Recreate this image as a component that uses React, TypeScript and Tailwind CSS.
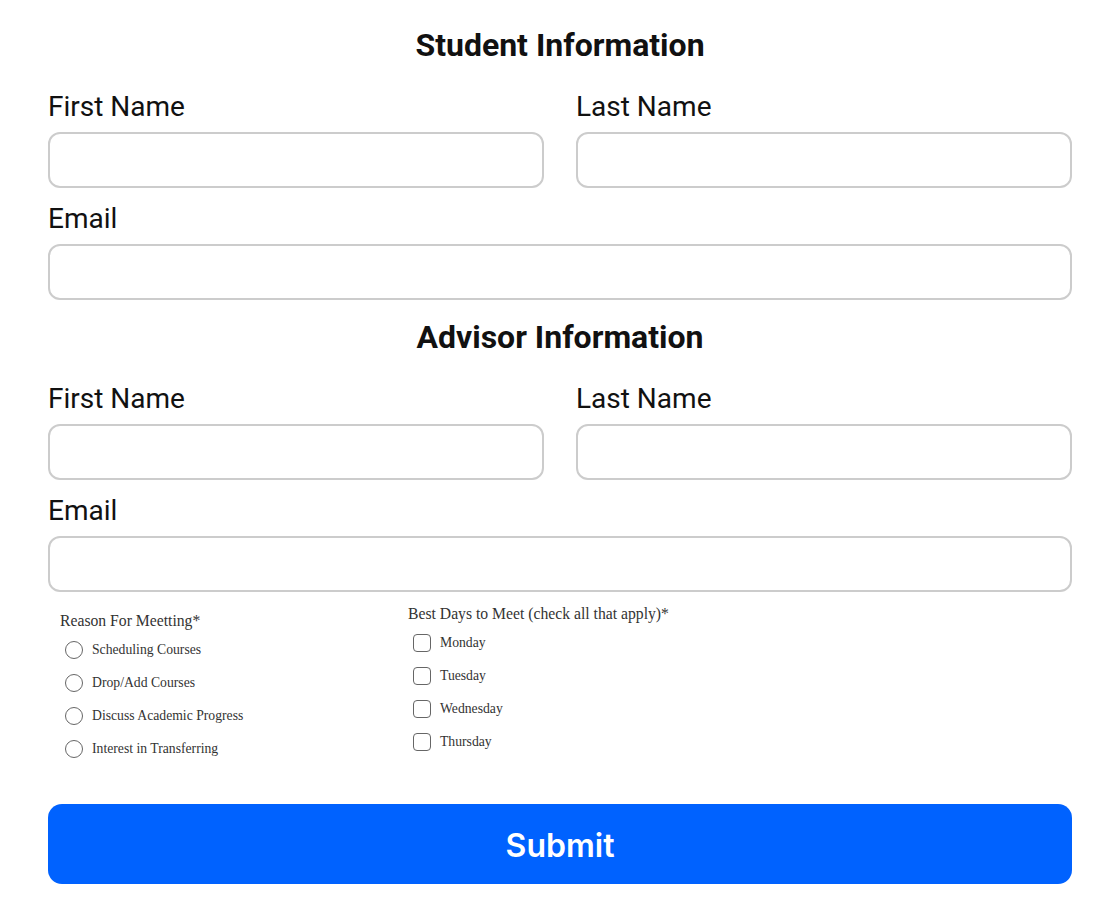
import React from "react";

const inputCls =
  "block w-full h-14 rounded-xl border-2 border-[#cccccc] bg-white outline-none px-3 text-xl";

function Field({ label }: { label: string }) {
  return (
    <div className="flex flex-col">
      <label className="pt-px text-[28px] leading-8 text-[#111]">{label}</label>
      <input type="text" className={`${inputCls} mt-[9px]`} />
    </div>
  );
}

function Section({ title, first }: { title: string; first?: boolean }) {
  return (
    <section className="flex flex-col">
      <h2
        className={`text-center text-[32px] leading-9 font-bold text-[#111] ${
          first ? "mt-[27px]" : "mt-[19px]"
        }`}
      >
        {title}
      </h2>
      <div className="mt-[27px] grid grid-cols-2 gap-8">
        <Field label="First Name" />
        <Field label="Last Name" />
      </div>
      <div className="mt-[14px]">
        <Field label="Email" />
      </div>
    </section>
  );
}

const reasons = [
  "Scheduling Courses",
  "Drop/Add Courses",
  "Discuss Academic Progress",
  "Interest in Transferring",
];
const days = ["Monday", "Tuesday", "Wednesday", "Thursday"];

export default function App() {
  return (
    <div className="min-h-screen bg-white font-['Roboto',sans-serif]">
      <form className="mx-12 flex flex-col" onSubmit={(e) => e.preventDefault()}>
        <Section title="Student Information" first />
        <Section title="Advisor Information" />

        <div className="flex font-['Liberation_Serif',serif] text-[#333]">
          <div className="w-[360px] pl-3 pt-[19px]">
            <div className="text-[15.7px] leading-5">Reason For Meetting*</div>
            <div className="mt-[9px] flex flex-col gap-[13px]">
              {reasons.map((r) => (
                <label key={r} className="flex items-center h-5 text-[13.7px]">
                  <span className="ml-[5px] w-[18px] h-[18px] rounded-full border border-[#666] bg-white" />
                  <span className="ml-[9px]">{r}</span>
                </label>
              ))}
            </div>
          </div>
          <div className="pt-[12px]">
            <div className="text-[15.7px] leading-5">
              Best Days to Meet (check all that apply)*
            </div>
            <div className="mt-[9px] flex flex-col gap-[13px]">
              {days.map((d) => (
                <label key={d} className="flex items-center h-5 text-[13.7px]">
                  <span className="ml-[5px] w-[18px] h-[18px] rounded-[4px] border border-[#666] bg-white" />
                  <span className="ml-[9px]">{d}</span>
                </label>
              ))}
            </div>
          </div>
        </div>

        <button
          type="submit"
          className="mt-[45px] h-20 w-full rounded-[14px] bg-[#0062ff] pt-1 text-white text-[32px] font-semibold font-['Inter',sans-serif]"
        >
          Submit
        </button>
      </form>
    </div>
  );
}
